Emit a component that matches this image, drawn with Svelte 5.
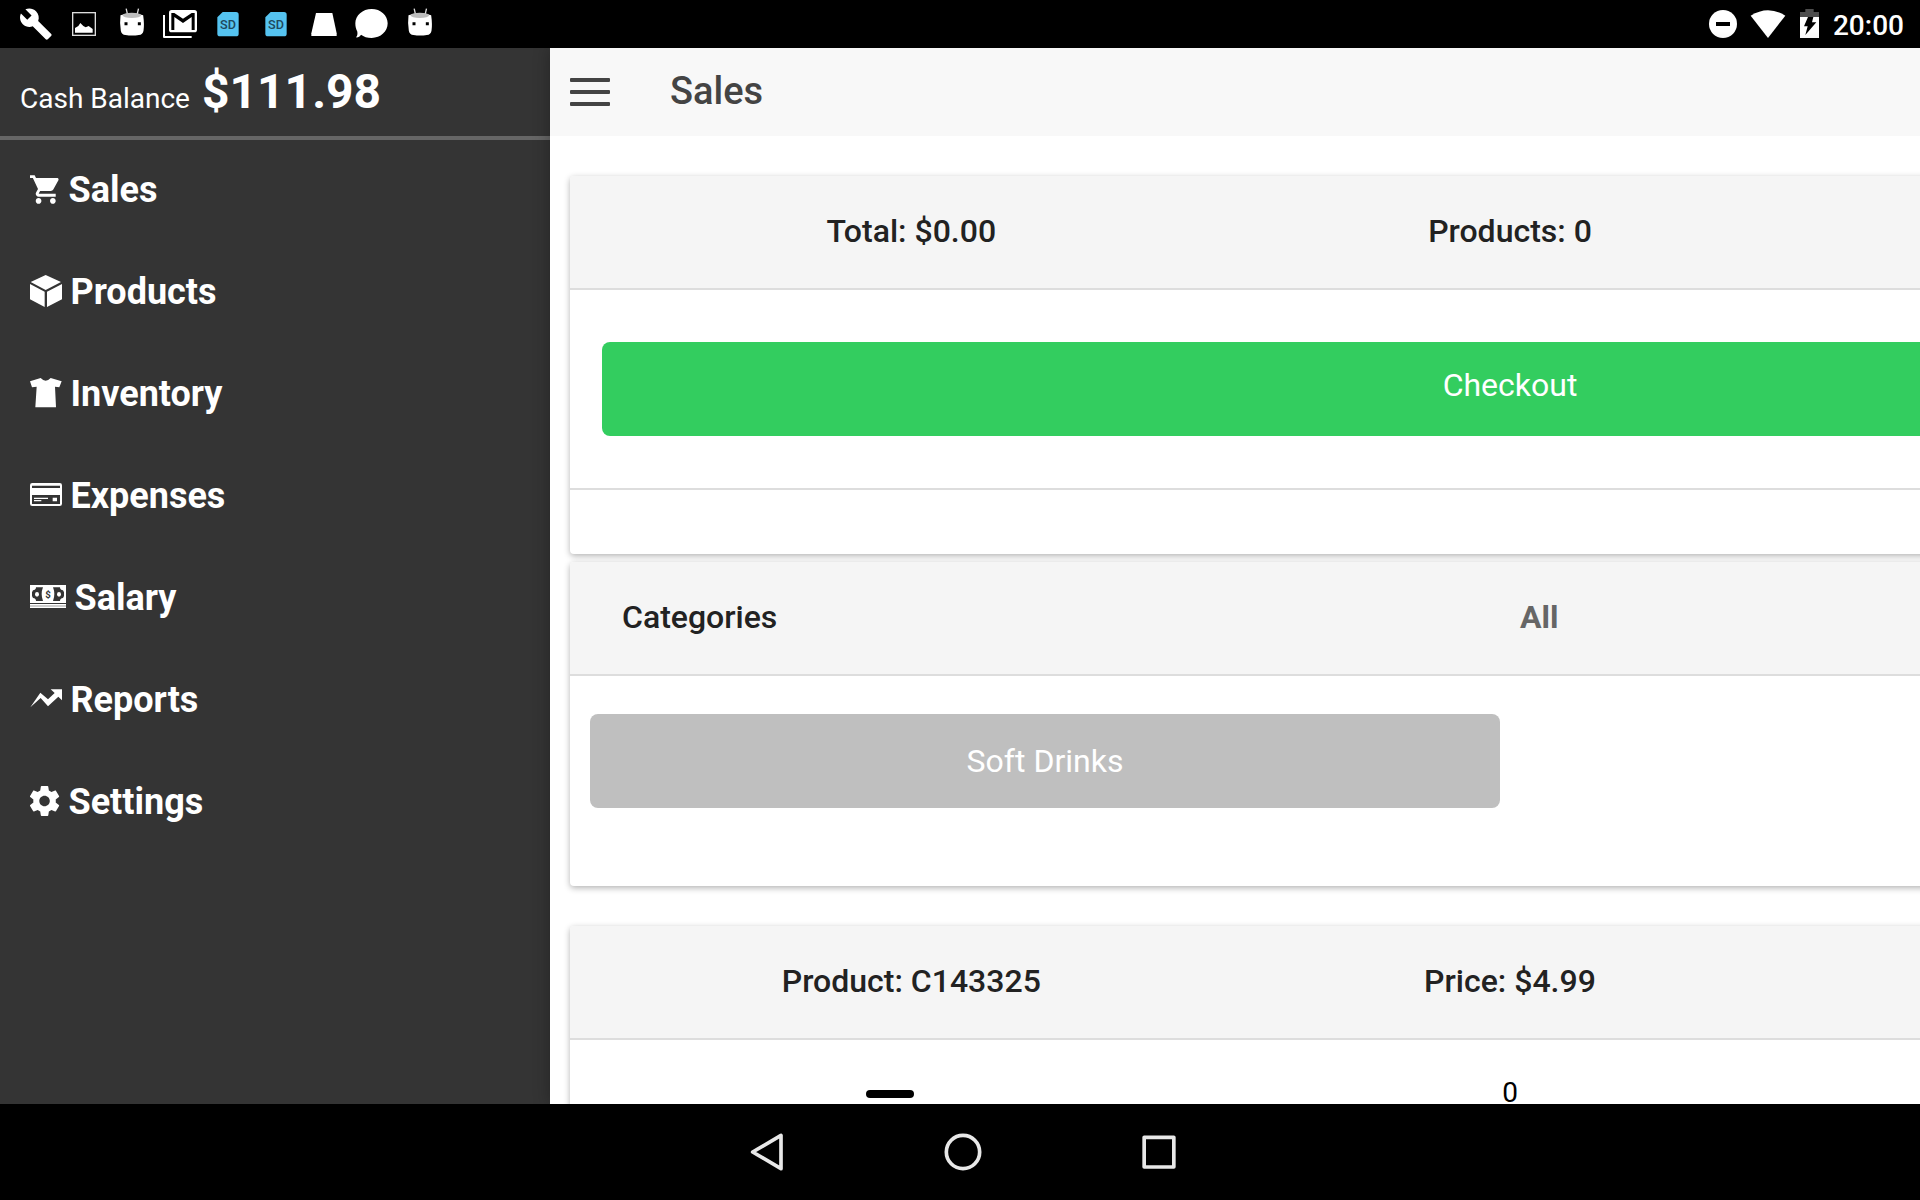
<script>
  const notifications = ['wrench', 'image', 'android', 'mail', 'sd', 'sd', 'disk', 'chat', 'android'];
  const menu = [
    { label: 'Sales', icon: 'cart' },
    { label: 'Products', icon: 'cube' },
    { label: 'Inventory', icon: 'shirt' },
    { label: 'Expenses', icon: 'card' },
    { label: 'Salary', icon: 'cash' },
    { label: 'Reports', icon: 'trend' },
    { label: 'Settings', icon: 'gear' }
  ];
</script>

<div class="screen">
  <header class="status">
    <div class="notes">
      {#each notifications as kind}
        <svg width="48" height="48" viewBox="0 0 144 144">
          {#if kind === 'wrench'}
            <path fill="#fff" transform="translate(20 20.5) scale(4.3)" d="M22.7 19l-9.1-9.1c.9-2.3.4-5-1.5-6.9-2-2-5-2.4-7.4-1.3L9 6 6 9 1.6 4.7C.4 7.1.9 10.1 2.9 12.1c1.9 1.9 4.6 2.4 6.9 1.5l9.1 9.1c.4.4 1 .4 1.4 0l2.3-2.3c.5-.4.5-1.1.1-1.4z" />
          {:else if kind === 'image'}
            <rect x="38" y="38" width="68" height="68" fill="none" stroke="#ddd" stroke-width="4" />
            <path fill="#fff" d="M45 98V84l10-6 6-9 9 9 7 4 9-4 12 9v11z" />
          {:else if kind === 'android'}
            <g transform="translate(-1.500 0)">
              <path fill="none" stroke="#ddd" stroke-width="4" d="M56 26l4 17M93 26l-4 17" />
              <path fill="#fff" d="M39 46q35-12 68 0 4 28 1 46-2 12-14 13-20 3-40 0-12-1-14-13-4-20-1-46z" />
              <ellipse cx="73" cy="46" rx="28" ry="8" fill="#bdbdbd" />
              <path d="M51 67h9v9h-9zM91 67h9v9h-9z" />
            </g>
          {:else if kind === 'mail'}
            <path fill="none" stroke="#fff" stroke-width="6" stroke-linejoin="round" d="M24 45v66h83" />
            <rect x="39" y="30" width="84" height="67" rx="8" fill="#fff" />
            <path d="M46 90V39h9l26 17 26-17h9v51h-9V51L81 69 55 51v39z" />
          {:else if kind === 'sd'}
            <path fill="#55c3f0" d="M56 36h40q8 0 8 8v57q0 8-8 8H48q-8 0-8-8V52z" />
            <text x="72" y="86" text-anchor="middle" class="sd">SD</text>
          {:else if kind === 'disk'}
            <path fill="#fff" d="M48 39h49l13 61v8H34v-8z" />
          {:else}
            <path fill="#fff" d="M71 27c27 0 48 19 48 43s-21 44-48 44c-13 0-24-4-32-10-4 6-9 9-15 8 4-4 5-10 4-17-4-7-6-15-6-25 0-24 22-43 49-43z" />
          {/if}
        </svg>
      {/each}
    </div>
    <div class="system">
      <svg width="28" height="48" viewBox="87 0 84 144">
        <circle cx="129" cy="72" r="42" fill="#fff" />
        <path d="M108 66h42v12h-42z" />
      </svg>
      <svg width="36" height="48" viewBox="210 0 108 144">
        <path fill="#fff" d="M212 47q52-33 104 0l-52 67z" />
      </svg>
      <svg class="battery" width="19" height="48" viewBox="360 0 57 144">
        <path fill="#4d4d4d" d="M360 36h16v-9h25v9h16v16h-57z" />
        <path fill="#fff" d="M360 51h57v63h-57z" />
        <path d="M384 51h16l-4 16h13l-33 38 7-26h-11z" />
      </svg>
      <span class="time">20:00</span>
    </div>
  </header>

  <div class="app">
    <aside>
      <div class="balance">
        <span>Cash Balance</span>
        <strong>$111.98</strong>
      </div>
      <nav>
        {#each menu as item}
          <a class="item">
            {#if item.icon === 'cart'}
              <svg width="30" height="29" viewBox="1 2 21 20" fill="#fff">
                <path d="M7 18c-1.1 0-1.99.9-1.99 2S5.9 22 7 22s2-.9 2-2-.9-2-2-2zM1 2v2h2l3.6 7.59-1.35 2.45c-.16.28-.25.61-.25.96 0 1.1.9 2 2 2h12v-2H7.42c-.14 0-.25-.11-.25-.25l.03-.12.9-1.63h7.45c.75 0 1.41-.41 1.75-1.03l3.58-6.49c.08-.14.12-.31.12-.48 0-.55-.45-1-1-1H5.21l-.94-2H1zm16 16c-1.1 0-1.99.9-1.99 2s.89 2 1.99 2 2-.9 2-2-.9-2-2-2z" />
              </svg>
            {:else if item.icon === 'cube'}
              <svg width="32" height="32" viewBox="0 0 96 96" fill="#fff">
                <path d="M47 0l46 21-46 24L2 21zM0 27l44 23v46L0 73zM96 27L51 50v46l45-23z" />
              </svg>
            {:else if item.icon === 'shirt'}
              <svg width="32" height="30" viewBox="0 0 96 90" fill="#fff">
                <path d="M32 0q15 16 30 0l33 10-7 18-13-2 3 62H16l4-62-14 2L0 10z" />
              </svg>
            {:else if item.icon === 'card'}
              <svg width="32" height="24" viewBox="0 0 96 72">
                <rect width="96" height="69" rx="7" fill="#fff" />
                <path fill="#343434" d="M6 8h84v7H6zM6 36h84v27H6z" />
                <path fill="#fff" d="M12 44h42v4H12zM12 51h22v4H12zM68 44h13v11H68z" />
              </svg>
            {:else if item.icon === 'cash'}
              <svg width="36" height="24" viewBox="0 0 108 72">
                <path fill="#fff" d="M0 0h108v54H0zM0 57h108v5H0zM0 64h108v5H0z" />
                <path fill="#343434" d="M18 7h21q-8 20 0 41H18q0-8-9-9l-3-6V22l3-6q9-1 9-9zM90 7H69q8 20 0 41h21q0-8 9-9l3-6V22l-3-6q-9-1-9-9z" />
                <ellipse cx="21" cy="28" rx="6" ry="7" fill="#fff" />
                <ellipse cx="87" cy="28" rx="6" ry="7" fill="#fff" />
                <text x="54" y="38" text-anchor="middle" class="dollar">$</text>
              </svg>
            {:else if item.icon === 'trend'}
              <svg width="32" height="20" viewBox="0 0 96 60" fill="#fff">
                <path d="M1 55L31 11l23 20 20-19L62 1h34v33L85 23 54 52 32 27z" />
              </svg>
            {:else}
              <svg width="30" height="30" viewBox="2.300 2 20 20" fill="#fff">
                <path d="M19.43 12.98c.04-.32.07-.64.07-.98s-.03-.66-.07-.98l2.11-1.65c.19-.15.24-.42.12-.64l-2-3.46c-.12-.22-.39-.3-.61-.22l-2.49 1c-.52-.4-1.08-.73-1.69-.98l-.38-2.65C14.46 2.18 14.25 2 14 2h-4c-.25 0-.46.18-.49.42l-.38 2.65c-.61.25-1.17.59-1.69.98l-2.49-1c-.23-.09-.49 0-.61.22l-2 3.46c-.13.22-.07.49.12.64l2.11 1.65c-.04.32-.07.65-.07.98s.03.66.07.98l-2.11 1.65c-.19.15-.24.42-.12.64l2 3.46c.12.22.39.3.61.22l2.49-1c.52.4 1.08.73 1.69.98l.38 2.65c.03.24.24.42.49.42h4c.25 0 .46-.18.49-.42l.38-2.65c.61-.25 1.17-.59 1.69-.98l2.49 1c.23.09.49 0 .61-.22l2-3.46c.12-.22.07-.49-.12-.64l-2.11-1.65zM12 15.5c-1.93 0-3.5-1.57-3.5-3.5s1.57-3.5 3.5-3.5 3.5 1.57 3.5 3.5-1.57 3.5-3.5 3.5z" />
              </svg>
            {/if}
            <span>{item.label}</span>
          </a>
        {/each}
      </nav>
    </aside>

    <main>
      <div class="page">
        <div class="toolbar">
          <div class="burger"><i></i><i></i><i></i></div>
          <h1>Sales</h1>
        </div>

        <section class="card">
          <div class="head thirds">
            <span>Total: $0.00</span>
            <span>Products: 0</span>
          </div>
          <div class="checkout-row">
            <button class="checkout">Checkout</button>
          </div>
          <div class="foot"></div>
        </section>

        <section class="card categories">
          <div class="head halves">
            <span>Categories</span>
            <b>All</b>
          </div>
          <div class="category-list">
            <button class="category">Soft Drinks</button>
          </div>
        </section>

        <section class="card product">
          <div class="head thirds">
            <span>Product: C143325</span>
            <span>Price: $4.99</span>
          </div>
          <div class="quantity">
            <i class="minus"></i>
            <span>0</span>
          </div>
        </section>
      </div>
    </main>
  </div>

  <footer class="softkeys">
    <svg width="48" height="48" viewBox="69 204 144 144">
      <path d="M98 276l85-50v100z" />
    </svg>
    <svg width="48" height="48" viewBox="657 204 144 144">
      <circle cx="729" cy="276" r="50" />
    </svg>
    <svg width="48" height="48" viewBox="1245 204 144 144">
      <rect x="1272.500" y="232" width="89" height="89" />
    </svg>
  </footer>
</div>

<style>
  :global(body) { margin: 0; }
  .screen {
    width: 1920px;
    height: 1200px;
    display: flex;
    flex-direction: column;
    overflow: hidden;
    background: #000;
    font-family: Roboto, sans-serif;
  }
  svg { display: block; flex: none; }

  .status {
    flex: none;
    height: 48px;
    display: flex;
    justify-content: space-between;
    padding: 0 16px 0 12px;
  }
  .notes { display: flex; }
  .sd { font: 500 38px Roboto, sans-serif; fill: #20485c; }
  .system { display: flex; align-items: center; }
  .system svg + svg { margin-left: 13px; }
  .system svg.battery { margin-left: 14px; }
  .time {
    margin-left: 14px;
    padding-top: 3px;
    color: #fff;
    font-size: 28px;
    font-weight: 500;
  }

  .app { flex: 1; min-height: 0; display: flex; }
  aside { flex: none; width: 550px; background: #343434; color: #fff; }
  .balance {
    box-sizing: border-box;
    height: 92px;
    padding: 15px 20px 0;
    border-bottom: 4px solid #666;
    display: flex;
    align-items: baseline;
    gap: 12px;
    font-size: 28px;
  }
  .balance strong { font-size: 48px; font-weight: 700; }
  nav { display: flex; flex-direction: column; gap: 58px; padding: 27px 30px 0; }
  .item {
    height: 44px;
    display: flex;
    align-items: center;
    gap: 8.5px;
    font-size: 36px;
    font-weight: 700;
    line-height: 42px;
  }
  .item span { padding-top: 2px; }
  .dollar { font: 700 29px Roboto, sans-serif; fill: #343434; }

  main {
    flex: 1;
    min-width: 0;
    display: flex;
    align-items: flex-start;
    background: #fff;
    box-shadow: 0 0 16px rgba(0, 0, 0, 0.3);
    overflow: hidden;
    z-index: 1;
  }
  .page { flex: none; width: 1920px; height: 1056px; overflow: hidden; }
  .toolbar {
    box-sizing: border-box;
    height: 88px;
    padding-left: 20px;
    display: flex;
    align-items: center;
    gap: 60px;
    background: #f8f8f8;
  }
  .burger { width: 40px; display: flex; flex-direction: column; gap: 8px; }
  .burger i { height: 4px; border-radius: 1px; background: #444; }
  h1 { margin: 0; padding-bottom: 2px; font-size: 38px; font-weight: 500; color: #444; }

  .card {
    margin: 40px 20px 0;
    border-radius: 4px;
    overflow: hidden;
    background: #fff;
    box-shadow: 0 2px 6px rgba(0, 0, 0, 0.3);
  }
  .card.categories { margin-top: 8px; }
  .head {
    box-sizing: border-box;
    height: 114px;
    padding: 0 42px 2px;
    display: grid;
    align-items: center;
    background: #f5f5f5;
    border-bottom: 2px solid #ddd;
    font-size: 32px;
    font-weight: 500;
    color: #222;
  }
  .thirds { grid-template-columns: repeat(3, 1fr); text-align: center; }
  .halves { grid-template-columns: repeat(2, 1fr); }
  .halves > * { padding-left: 10px; }
  .halves b { font-weight: 700; color: #666; }
  button {
    display: block;
    height: 94px;
    border: 0;
    border-radius: 8px;
    color: #fff;
    font: 400 32px Roboto, sans-serif;
  }
  .checkout-row { padding: 52px 32px; border-bottom: 2px solid #ddd; }
  .checkout { width: 100%; padding: 0 0 8px; background: #33cd5f; }
  .foot { height: 64px; }
  .category-list { padding: 38px 20px 78px; }
  .category { width: 910px; padding: 0; background: #bfbfbf; }
  .quantity {
    display: grid;
    grid-template-columns: repeat(3, 1fr);
    padding: 36px 10px;
    justify-items: center;
    font-size: 28px;
    line-height: 23px;
    color: #000;
  }
  .quantity span { margin-top: 5px; }
  .minus { width: 48px; height: 8px; margin-top: 14px; border-radius: 4px; background: #000; }

  .softkeys {
    flex: none;
    height: 96px;
    display: flex;
    align-items: center;
    gap: 148px;
    padding-left: 743px;
  }
  .softkeys svg { fill: none; stroke: #e8e8e8; stroke-width: 11; stroke-linejoin: round; }
</style>
